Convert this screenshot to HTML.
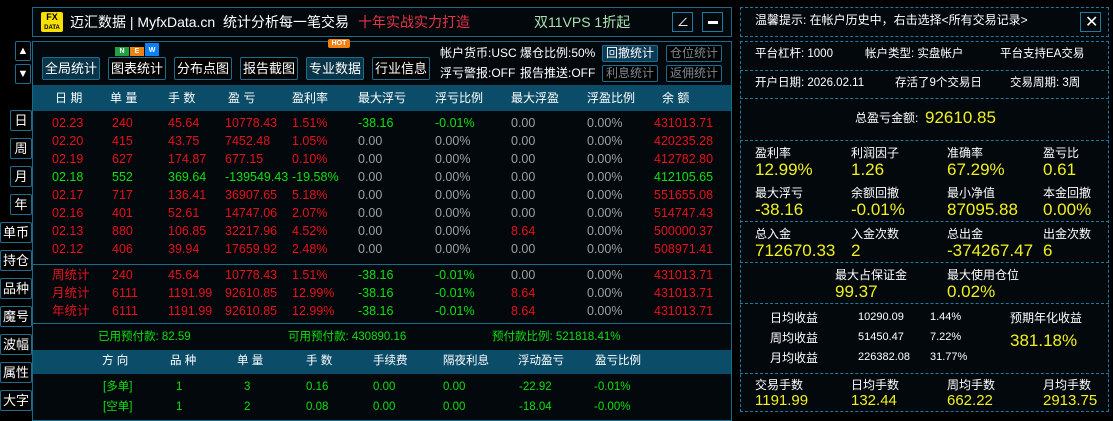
<!DOCTYPE html>
<html><head><meta charset="utf-8"><style>
*{margin:0;padding:0;box-sizing:border-box}
body{width:1113px;height:416px;background:#000;overflow:hidden;position:relative;font-family:"Liberation Sans","Noto Sans CJK SC",sans-serif;color:#fff;font-size:12px}
.a{position:absolute;white-space:nowrap;line-height:1}
.box{position:absolute;border:1px solid #1a6a8a}
.btn{position:absolute;border:1px solid #1d6e8e;border-radius:2px;color:#fff;font-size:13px;text-align:center;line-height:21px;background:#000}
.sb{position:absolute;border:1px solid #1d6e8e;border-radius:2px;color:#fff;font-size:13px;text-align:center;line-height:19px;background:#000;height:21px}
.r{color:#e8101a}.g{color:#10e010}.gr{color:#9aa0a4}.y{color:#f0f020}
.dash{position:absolute;border:1px dashed #1d7aa0}
.l{font-size:12px;color:#fff}.v{font-size:17px;color:#f0f020}
</style></head><body>
<!-- header -->
<div class="box" style="left:32px;top:7px;width:700px;height:30px;background:#02080c"></div>
<div class="a" style="left:41px;top:12px;width:22px;height:20px;background:#f5e000;border-radius:2px;color:#000;font-size:9px;font-weight:bold;text-align:center;line-height:9px;padding-top:1px">FX<br><span style="font-size:6px">DATA</span></div>
<div class="a" style="left:70px;top:15px;font-size:14px">迈汇数据 | MyfxData.cn &nbsp;统计分析每一笔交易</div>
<div class="a" style="left:358px;top:15px;font-size:14px;color:#e8344a">十年实战实力打造</div>
<div class="a" style="left:534px;top:15px;font-size:14px;color:#a8e0b0">双11VPS 1折起</div>
<div class="box" style="left:672px;top:12px;width:21px;height:20px;border-color:#1d7aa0"><div class="a" style="left:4px;top:3px;font-size:12px">∠</div></div>
<div class="box" style="left:702px;top:12px;width:21px;height:20px;border-color:#1d7aa0"><div class="a" style="left:5px;top:8px;width:10px;height:3px;background:#fff"></div></div>
<!-- main panel -->
<div class="box" style="left:32px;top:41px;width:700px;height:380px;background:#02080c"></div>
<div class="sb" style="left:15px;top:41px;width:16px;height:20px;font-size:11px">▲</div>
<div class="sb" style="left:15px;top:64px;width:16px;height:20px;font-size:11px">▼</div>
<div class="btn" style="left:42px;top:57px;width:58px;height:23px;background:#0a3448">全局统计</div>
<div class="btn" style="left:108px;top:57px;width:58px;height:23px">图表统计</div>
<div class="btn" style="left:174px;top:57px;width:58px;height:23px">分布点图</div>
<div class="btn" style="left:240px;top:57px;width:58px;height:23px">报告截图</div>
<div class="btn" style="left:306px;top:57px;width:58px;height:23px;background:#0a3448">专业数据</div>
<div class="btn" style="left:372px;top:57px;width:58px;height:23px">行业信息</div>
<div class="a" style="left:115px;top:47px;width:14px;height:9px;background:#20a040;font-size:7px;text-align:center;line-height:9px;font-weight:bold">N</div>
<div class="a" style="left:130px;top:47px;width:14px;height:9px;background:#f08010;font-size:7px;text-align:center;line-height:9px;font-weight:bold">E</div>
<div class="a" style="left:145px;top:43px;width:14px;height:13px;background:#1080f0;font-size:7px;text-align:center;line-height:16px;font-weight:bold">W</div>
<div class="a" style="left:328px;top:39px;width:22px;height:9px;background:#f08010;font-size:7px;text-align:center;line-height:9px;font-weight:bold;border-radius:2px">HOT</div>
<div class="a" style="left:440px;top:47px;font-size:12px">帐户货币:USC</div>
<div class="a" style="left:520px;top:47px;font-size:12px">爆仓比例:50%</div>
<div class="a" style="left:440px;top:67px;font-size:12px">浮亏警报:OFF</div>
<div class="a" style="left:520px;top:67px;font-size:12px">报告推送:OFF</div>
<div class="btn" style="left:602px;top:45px;width:56px;height:17px;line-height:15px;font-size:12px;background:#0a3a55">回撤统计</div>
<div class="btn" style="left:666px;top:45px;width:56px;height:17px;line-height:15px;font-size:12px;color:#7a8a90">仓位统计</div>
<div class="btn" style="left:602px;top:65px;width:56px;height:17px;line-height:15px;font-size:12px;color:#7a8a90">利息统计</div>
<div class="btn" style="left:666px;top:65px;width:56px;height:17px;line-height:15px;font-size:12px;color:#7a8a90">返佣统计</div>
<!-- table header -->
<div class="a" style="left:33px;top:85px;width:698px;height:26px;background:#0b4d68"></div>
<div class="a" style="left:55px;top:92px;font-size:12px">日 期</div>
<div class="a" style="left:110px;top:92px">单 量</div>
<div class="a" style="left:168px;top:92px">手 数</div>
<div class="a" style="left:228px;top:92px">盈 亏</div>
<div class="a" style="left:292px;top:92px">盈利率</div>
<div class="a" style="left:358px;top:92px">最大浮亏</div>
<div class="a" style="left:435px;top:92px">浮亏比例</div>
<div class="a" style="left:511px;top:92px">最大浮盈</div>
<div class="a" style="left:587px;top:92px">浮盈比例</div>
<div class="a" style="left:662px;top:92px">余 额</div>
<!-- rows -->
<div style="position:absolute;left:0;top:0;font-size:12.5px">
<div class="a r" style="left:52px;top:117px">02.23</div><div class="a r" style="left:112px;top:117px">240</div><div class="a r" style="left:168px;top:117px">45.64</div><div class="a r" style="left:225px;top:117px">10778.43</div><div class="a r" style="left:292px;top:117px">1.51%</div><div class="a g" style="left:358px;top:117px">-38.16</div><div class="a g" style="left:435px;top:117px">-0.01%</div><div class="a gr" style="left:511px;top:117px">0.00</div><div class="a gr" style="left:587px;top:117px">0.00%</div><div class="a r" style="left:654px;top:117px">431013.71</div>
<div class="a r" style="left:52px;top:135px">02.20</div><div class="a r" style="left:112px;top:135px">415</div><div class="a r" style="left:168px;top:135px">43.75</div><div class="a r" style="left:225px;top:135px">7452.48</div><div class="a r" style="left:292px;top:135px">1.05%</div><div class="a gr" style="left:358px;top:135px">0.00</div><div class="a gr" style="left:435px;top:135px">0.00%</div><div class="a gr" style="left:511px;top:135px">0.00</div><div class="a gr" style="left:587px;top:135px">0.00%</div><div class="a r" style="left:654px;top:135px">420235.28</div>
<div class="a r" style="left:52px;top:153px">02.19</div><div class="a r" style="left:112px;top:153px">627</div><div class="a r" style="left:168px;top:153px">174.87</div><div class="a r" style="left:225px;top:153px">677.15</div><div class="a r" style="left:292px;top:153px">0.10%</div><div class="a gr" style="left:358px;top:153px">0.00</div><div class="a gr" style="left:435px;top:153px">0.00%</div><div class="a gr" style="left:511px;top:153px">0.00</div><div class="a gr" style="left:587px;top:153px">0.00%</div><div class="a r" style="left:654px;top:153px">412782.80</div>
<div class="a g" style="left:52px;top:171px">02.18</div><div class="a g" style="left:112px;top:171px">552</div><div class="a g" style="left:168px;top:171px">369.64</div><div class="a g" style="left:225px;top:171px">-139549.43</div><div class="a g" style="left:292px;top:171px">-19.58%</div><div class="a gr" style="left:358px;top:171px">0.00</div><div class="a gr" style="left:435px;top:171px">0.00%</div><div class="a gr" style="left:511px;top:171px">0.00</div><div class="a gr" style="left:587px;top:171px">0.00%</div><div class="a g" style="left:654px;top:171px">412105.65</div>
<div class="a r" style="left:52px;top:189px">02.17</div><div class="a r" style="left:112px;top:189px">717</div><div class="a r" style="left:168px;top:189px">136.41</div><div class="a r" style="left:225px;top:189px">36907.65</div><div class="a r" style="left:292px;top:189px">5.18%</div><div class="a gr" style="left:358px;top:189px">0.00</div><div class="a gr" style="left:435px;top:189px">0.00%</div><div class="a gr" style="left:511px;top:189px">0.00</div><div class="a gr" style="left:587px;top:189px">0.00%</div><div class="a r" style="left:654px;top:189px">551655.08</div>
<div class="a r" style="left:52px;top:207px">02.16</div><div class="a r" style="left:112px;top:207px">401</div><div class="a r" style="left:168px;top:207px">52.61</div><div class="a r" style="left:225px;top:207px">14747.06</div><div class="a r" style="left:292px;top:207px">2.07%</div><div class="a gr" style="left:358px;top:207px">0.00</div><div class="a gr" style="left:435px;top:207px">0.00%</div><div class="a gr" style="left:511px;top:207px">0.00</div><div class="a gr" style="left:587px;top:207px">0.00%</div><div class="a r" style="left:654px;top:207px">514747.43</div>
<div class="a r" style="left:52px;top:225px">02.13</div><div class="a r" style="left:112px;top:225px">880</div><div class="a r" style="left:168px;top:225px">106.85</div><div class="a r" style="left:225px;top:225px">32217.96</div><div class="a r" style="left:292px;top:225px">4.52%</div><div class="a gr" style="left:358px;top:225px">0.00</div><div class="a gr" style="left:435px;top:225px">0.00%</div><div class="a r" style="left:511px;top:225px">8.64</div><div class="a gr" style="left:587px;top:225px">0.00%</div><div class="a r" style="left:654px;top:225px">500000.37</div>
<div class="a r" style="left:52px;top:243px">02.12</div><div class="a r" style="left:112px;top:243px">406</div><div class="a r" style="left:168px;top:243px">39.94</div><div class="a r" style="left:225px;top:243px">17659.92</div><div class="a r" style="left:292px;top:243px">2.48%</div><div class="a gr" style="left:358px;top:243px">0.00</div><div class="a gr" style="left:435px;top:243px">0.00%</div><div class="a gr" style="left:511px;top:243px">0.00</div><div class="a gr" style="left:587px;top:243px">0.00%</div><div class="a r" style="left:654px;top:243px">508971.41</div>
</div>
<div class="a" style="left:33px;top:264px;width:698px;height:1px;background:#1a6a8a"></div>
<div style="position:absolute;left:0;top:0;font-size:12.5px">
<div class="a r" style="left:52px;top:269px">周统计</div><div class="a r" style="left:112px;top:269px">240</div><div class="a r" style="left:168px;top:269px">45.64</div><div class="a r" style="left:225px;top:269px">10778.43</div><div class="a r" style="left:292px;top:269px">1.51%</div><div class="a g" style="left:358px;top:269px">-38.16</div><div class="a g" style="left:435px;top:269px">-0.01%</div><div class="a gr" style="left:511px;top:269px">0.00</div><div class="a gr" style="left:587px;top:269px">0.00%</div><div class="a r" style="left:654px;top:269px">431013.71</div>
<div class="a r" style="left:52px;top:287px">月统计</div><div class="a r" style="left:112px;top:287px">6111</div><div class="a r" style="left:168px;top:287px">1191.99</div><div class="a r" style="left:225px;top:287px">92610.85</div><div class="a r" style="left:292px;top:287px">12.99%</div><div class="a g" style="left:358px;top:287px">-38.16</div><div class="a g" style="left:435px;top:287px">-0.01%</div><div class="a r" style="left:511px;top:287px">8.64</div><div class="a gr" style="left:587px;top:287px">0.00%</div><div class="a r" style="left:654px;top:287px">431013.71</div>
<div class="a r" style="left:52px;top:305px">年统计</div><div class="a r" style="left:112px;top:305px">6111</div><div class="a r" style="left:168px;top:305px">1191.99</div><div class="a r" style="left:225px;top:305px">92610.85</div><div class="a r" style="left:292px;top:305px">12.99%</div><div class="a g" style="left:358px;top:305px">-38.16</div><div class="a g" style="left:435px;top:305px">-0.01%</div><div class="a r" style="left:511px;top:305px">8.64</div><div class="a gr" style="left:587px;top:305px">0.00%</div><div class="a r" style="left:654px;top:305px">431013.71</div>
</div>
<div class="a" style="left:33px;top:323px;width:698px;height:1px;background:#1a6a8a"></div>
<div class="a g" style="left:98px;top:332px;font-size:11.5px">已用预付款: 82.59</div>
<div class="a g" style="left:288px;top:332px;font-size:11.5px">可用预付款: 430890.16</div>
<div class="a g" style="left:492px;top:332px;font-size:11.5px">预付款比例: 521818.41%</div>
<div class="a" style="left:33px;top:350px;width:698px;height:24px;background:#0b4d68"></div>
<div style="position:absolute;left:0;top:0;font-size:11.5px">
<div class="a" style="left:102px;top:356px">方 向</div><div class="a" style="left:170px;top:356px">品 种</div><div class="a" style="left:237px;top:356px">单 量</div><div class="a" style="left:306px;top:356px">手 数</div><div class="a" style="left:373px;top:356px">手续费</div><div class="a" style="left:443px;top:356px">隔夜利息</div><div class="a" style="left:518px;top:356px">浮动盈亏</div><div class="a" style="left:595px;top:356px">盈亏比例</div>
<div class="a g" style="left:103px;top:382px">[多单]</div><div class="a g" style="left:176px;top:382px">1</div><div class="a g" style="left:244px;top:382px">3</div><div class="a g" style="left:306px;top:382px">0.16</div><div class="a g" style="left:373px;top:382px">0.00</div><div class="a g" style="left:443px;top:382px">0.00</div><div class="a g" style="left:519px;top:382px">-22.92</div><div class="a g" style="left:594px;top:382px">-0.01%</div>
<div class="a g" style="left:103px;top:402px">[空单]</div><div class="a g" style="left:176px;top:402px">1</div><div class="a g" style="left:244px;top:402px">2</div><div class="a g" style="left:306px;top:402px">0.08</div><div class="a g" style="left:373px;top:402px">0.00</div><div class="a g" style="left:443px;top:402px">0.00</div><div class="a g" style="left:519px;top:402px">-18.04</div><div class="a g" style="left:594px;top:402px">-0.00%</div>
</div>
<!-- sidebar -->
<div class="sb" style="left:10px;top:110px;width:22px">日</div>
<div class="sb" style="left:10px;top:138px;width:22px">周</div>
<div class="sb" style="left:10px;top:166px;width:22px">月</div>
<div class="sb" style="left:10px;top:194px;width:22px">年</div>
<div class="sb" style="left:0;top:222px;width:32px">单币</div>
<div class="sb" style="left:0;top:250px;width:32px">持仓</div>
<div class="sb" style="left:0;top:278px;width:32px">品种</div>
<div class="sb" style="left:0;top:306px;width:32px">魔号</div>
<div class="sb" style="left:0;top:334px;width:32px">波幅</div>
<div class="sb" style="left:0;top:362px;width:32px">属性</div>
<div class="sb" style="left:0;top:390px;width:32px">大字</div>
<!-- right panel -->
<div class="a" style="left:740px;top:7px;width:369px;height:405px;background:#02080c"></div>
<div class="dash" style="left:740px;top:7px;width:369px;height:30px"></div>
<div class="a" style="left:755px;top:14px">温馨提示: 在帐户历史中，右击选择&lt;所有交易记录&gt;</div>
<div class="box" style="left:1080px;top:12px;width:21px;height:20px;border-color:#1d7aa0"><div class="a" style="left:4px;top:2px;font-size:16px">✕</div></div>
<div class="dash" style="left:740px;top:41px;width:369px;height:371px"></div>
<div class="dash" style="left:740px;top:70px;width:369px;height:1px;border-width:1px 0 0"></div>
<div class="dash" style="left:740px;top:98px;width:369px;height:1px;border-width:1px 0 0"></div>
<div class="dash" style="left:740px;top:140px;width:369px;height:1px;border-width:1px 0 0"></div>
<div class="dash" style="left:740px;top:221px;width:369px;height:1px;border-width:1px 0 0"></div>
<div class="dash" style="left:740px;top:262px;width:369px;height:1px;border-width:1px 0 0"></div>
<div class="dash" style="left:740px;top:303px;width:369px;height:1px;border-width:1px 0 0"></div>
<div class="dash" style="left:740px;top:373px;width:369px;height:1px;border-width:1px 0 0"></div>
<div class="a l" style="left:755px;top:49px;font-size:11.5px">平台杠杆: 1000</div>
<div class="a l" style="left:865px;top:49px;font-size:11.5px">帐户类型: 实盘帐户</div>
<div class="a l" style="left:1000px;top:49px;font-size:11.5px">平台支持EA交易</div>
<div class="a l" style="left:755px;top:78px;font-size:11.5px">开户日期: 2026.02.11</div>
<div class="a l" style="left:895px;top:78px;font-size:11.5px">存活了9个交易日</div>
<div class="a l" style="left:1010px;top:78px;font-size:11.5px">交易周期: 3周</div>
<div class="a l" style="left:855px;top:112px">总盈亏金额:</div>
<div class="a v" style="left:925px;top:109px;font-size:17px">92610.85</div>
<div class="a l" style="left:755px;top:147px">盈利率</div><div class="a l" style="left:851px;top:147px">利润因子</div><div class="a l" style="left:947px;top:147px">准确率</div><div class="a l" style="left:1043px;top:147px">盈亏比</div>
<div class="a v" style="left:755px;top:161px">12.99%</div><div class="a v" style="left:851px;top:161px">1.26</div><div class="a v" style="left:947px;top:161px">67.29%</div><div class="a v" style="left:1043px;top:161px">0.61</div>
<div class="a l" style="left:755px;top:187px">最大浮亏</div><div class="a l" style="left:851px;top:187px">余额回撤</div><div class="a l" style="left:947px;top:187px">最小净值</div><div class="a l" style="left:1043px;top:187px">本金回撤</div>
<div class="a v" style="left:755px;top:201px">-38.16</div><div class="a v" style="left:851px;top:201px">-0.01%</div><div class="a v" style="left:947px;top:201px">87095.88</div><div class="a v" style="left:1043px;top:201px">0.00%</div>
<div class="a l" style="left:755px;top:228px">总入金</div><div class="a l" style="left:851px;top:228px">入金次数</div><div class="a l" style="left:947px;top:228px">总出金</div><div class="a l" style="left:1043px;top:228px">出金次数</div>
<div class="a v" style="left:755px;top:242px">712670.33</div><div class="a v" style="left:851px;top:242px">2</div><div class="a v" style="left:947px;top:242px">-374267.47</div><div class="a v" style="left:1043px;top:242px">6</div>
<div class="a l" style="left:835px;top:269px">最大占保证金</div><div class="a l" style="left:947px;top:269px">最大使用仓位</div>
<div class="a v" style="left:835px;top:283px">99.37</div><div class="a v" style="left:947px;top:283px">0.02%</div>
<div class="a l" style="left:770px;top:312px">日均收益</div><div class="a l" style="left:858px;top:312px;font-size:11px">10290.09</div><div class="a l" style="left:930px;top:312px;font-size:11px">1.44%</div>
<div class="a l" style="left:770px;top:332px">周均收益</div><div class="a l" style="left:858px;top:332px;font-size:11px">51450.47</div><div class="a l" style="left:930px;top:332px;font-size:11px">7.22%</div>
<div class="a l" style="left:770px;top:352px">月均收益</div><div class="a l" style="left:858px;top:352px;font-size:11px">226382.08</div><div class="a l" style="left:930px;top:352px;font-size:11px">31.77%</div>
<div class="a l" style="left:1010px;top:312px">预期年化收益</div>
<div class="a v" style="left:1010px;top:332px">381.18%</div>
<div class="a l" style="left:755px;top:379px">交易手数</div><div class="a l" style="left:851px;top:379px">日均手数</div><div class="a l" style="left:947px;top:379px">周均手数</div><div class="a l" style="left:1043px;top:379px">月均手数</div>
<div class="a v" style="left:755px;top:393px;font-size:15px">1191.99</div><div class="a v" style="left:851px;top:393px;font-size:15px">132.44</div><div class="a v" style="left:947px;top:393px;font-size:15px">662.22</div><div class="a v" style="left:1043px;top:393px;font-size:15px">2913.75</div>
</body></html>
